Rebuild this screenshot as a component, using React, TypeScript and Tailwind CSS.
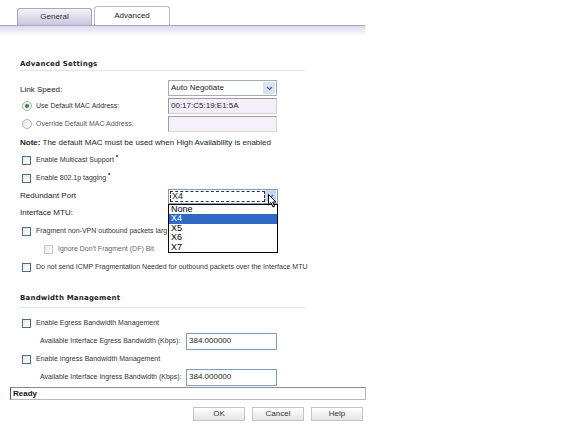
import type { ReactNode } from 'react';

const sans = { fontFamily: '"Liberation Sans", Arial, sans-serif' };
const heavy = { fontFamily: '"DejaVu Sans", Verdana, sans-serif' };

function Checkbox({ disabled }: { disabled?: boolean }) {
  return (
    <span
      className={
        'inline-block h-[9px] w-[9px] shrink-0 border bg-gradient-to-br from-[#e8e8e4] to-white ' +
        (disabled ? 'border-[#c8c8c8]' : 'border-[#4f6e8c]')
      }
    />
  );
}

function Radio({ checked }: { checked?: boolean }) {
  return (
    <span className="flex h-[10px] w-[10px] shrink-0 items-center justify-center rounded-full border border-[#b4b4b4] bg-gradient-to-br from-[#e6e6e6] to-white">
      {checked && <span className="h-[4px] w-[4px] rounded-full bg-[#2e8a3c]" />}
    </span>
  );
}

function Row({ children, className = '' }: { children: ReactNode; className?: string }) {
  return <div className={'flex h-[18px] items-center ' + className}>{children}</div>;
}

function Small({ children, className = '' }: { children: ReactNode; className?: string }) {
  return <span className={'text-[7px] whitespace-nowrap text-[#333] ' + className}>{children}</span>;
}

function Arrow() {
  return (
    <svg width="7" height="5" viewBox="0 0 7 5">
      <path d="M1 1 L3.5 3.5 L6 1" fill="none" stroke="#4d6185" strokeWidth="1.2" />
    </svg>
  );
}

function Heading({ children, pad = 'pb-[1px]' }: { children: ReactNode; pad?: string }) {
  return (
    <div className={'w-[285px] border-b border-[#dfe6ec] leading-[10px] ' + pad}>
      <span className="text-[7px] font-bold tracking-[0.2px] text-[#1c1c2c]" style={heavy}>
        {children}
      </span>
    </div>
  );
}

export default function App() {
  return (
    <div className="relative h-[440px] w-[576px] overflow-hidden bg-white text-[8px] leading-[1.2] text-black" style={sans}>
      {/* tabs */}
      <div className="flex h-[25px] items-end pl-[17px]">
        <div className="flex h-[17px] w-[75px] items-center justify-center rounded-t-[3px] border border-b-0 border-[#a7a5bd] bg-gradient-to-b from-[#f4f3fa] to-[#c9c7dc] text-[8px] text-[#333]">
          General
        </div>
        <div className="relative z-10 ml-[2px] flex h-[19px] w-[76px] items-center justify-center rounded-t-[3px] border border-b-0 border-[#b7b6c8] bg-white text-[8px] text-[#222]">
          Advanced
        </div>
      </div>
      <div className="h-[11px] w-[365px] border-t border-[#a9a5c4] bg-gradient-to-b from-[#dcd8f0] to-white" />

      <div className="pl-[20px] pt-[23px]">
        <Heading>Advanced Settings</Heading>

        <div className="pt-[8px]">
          <Row>
            <span className="w-[148px] pt-[4px] text-[8px] text-[#222]">Link Speed:</span>
            <div className="flex h-[16px] w-[109px] items-center justify-between border border-[#a7abb3] bg-white pl-[2px] pr-[1px]">
              <span className="text-[8px] text-[#222]">Auto Negotiate</span>
              <span className="flex h-[12px] w-[12px] items-center justify-center rounded-[1px] bg-[#d8e4f6]">
                <Arrow />
              </span>
            </div>
          </Row>
          <Row>
            <div className="flex w-[148px] items-center pl-[2px]">
              <Radio checked />
              <Small className="ml-[4px]">Use Default MAC Address:</Small>
            </div>
            <div className="flex h-[16px] w-[109px] items-center border border-[#d0d0d0] border-t-[#9a9a9a] border-l-[#9a9a9a] bg-[#f4eefb] pl-[2px] text-[8px] text-[#222]">
              00:17:C5:19:E1:5A
            </div>
          </Row>
          <Row>
            <div className="flex w-[148px] items-center pl-[2px]">
              <Radio />
              <Small className="ml-[4px] text-[#555]">Override Default MAC Address:</Small>
            </div>
            <div className="h-[16px] w-[109px] border border-[#d8d8d8] border-t-[#a0a0a0] border-l-[#a0a0a0] bg-[#f4f1fa]" />
          </Row>
          <Row className="pt-[1px]">
            <span className="text-[8px] text-[#222]">
              <b>Note:</b> The default MAC must be used when High Availability is enabled
            </span>
          </Row>
          <Row>
            <div className="flex items-center pl-[2px]">
              <Checkbox />
              <Small className="ml-[5px]">Enable Multicast Support</Small>
              <span className="ml-[2px] -mt-[4px] text-[6px] font-bold">*</span>
            </div>
          </Row>
          <Row>
            <div className="flex items-center pl-[2px]">
              <Checkbox />
              <Small className="ml-[5px]">Enable 802.1p tagging</Small>
              <span className="ml-[2px] -mt-[4px] text-[6px] font-bold">*</span>
            </div>
          </Row>
          <Row>
            <span className="w-[148px] text-[8px] text-[#222]">Redundant Port</span>
            <div className="relative z-10 flex h-[15px] w-[110px] items-center justify-between border border-[#7f9db9] bg-white pr-[1px]">
              <span className="ml-[1px] flex h-[11px] w-[96px] items-center border border-dashed border-[#333] pl-[1px] text-[9px] text-[#222]">
                X4
              </span>
              <span className="flex h-[12px] w-[11px] items-center justify-center rounded-[1px] bg-[#c6d6f2]">
                <Arrow />
              </span>
              <div className="absolute left-[-1px] top-[14px] flex w-[110px] flex-col border border-black bg-white text-[9px] leading-[9.6px] text-black">
                <span className="pl-[2px]">None</span>
                <span className="bg-[#316ac5] pl-[2px] text-white">X4</span>
                <span className="pl-[2px]">X5</span>
                <span className="pl-[2px]">X6</span>
                <span className="pl-[2px]">X7</span>
              </div>
              <svg className="absolute left-[99px] top-[4px]" width="10" height="15" viewBox="0 0 10 15">
                <path d="M0.5 0.5 L0.5 11 L3 8.6 L5 13 L6.6 12.3 L4.7 8 L8 8 Z" fill="white" stroke="black" strokeWidth="1" strokeLinejoin="round" />
              </svg>
            </div>
          </Row>
          <Row className="-mt-[1px]">
            <span className="text-[8px] text-[#222]">Interface MTU:</span>
          </Row>
          <Row>
            <div className="flex w-[147px] items-center overflow-hidden pl-[2px]">
              <Checkbox />
              <Small className="ml-[5px]">Fragment non-VPN outbound packets larger than this Interface&apos;s MTU</Small>
            </div>
          </Row>
          <Row>
            <div className="flex items-center pl-[24px]">
              <Checkbox disabled />
              <Small className="ml-[5px] text-[#666]">Ignore Don&apos;t Fragment (DF) Bit</Small>
            </div>
          </Row>
          <Row>
            <div className="flex items-center pl-[2px]">
              <Checkbox />
              <Small className="ml-[5px]">Do not send ICMP Fragmentation Needed for outbound packets over the Interface MTU</Small>
            </div>
          </Row>
        </div>

        <div className="pt-[17px]">
          <Heading pad="pb-[4px]">Bandwidth Management</Heading>
        </div>

        <div className="pt-[6px]">
          <Row>
            <div className="flex items-center pl-[2px]">
              <Checkbox />
              <Small className="ml-[5px]">Enable Egress Bandwidth Management</Small>
            </div>
          </Row>
          <Row>
            <Small className="w-[166px] pl-[20px]">Available Interface Egress Bandwidth (Kbps):</Small>
            <div className="flex h-[17px] w-[91px] items-center border border-[#7f9db9] bg-white pl-[2px] text-[8px] text-[#222]">
              384.000000
            </div>
          </Row>
          <Row>
            <div className="flex items-center pl-[2px]">
              <Checkbox />
              <Small className="ml-[5px]">Enable Ingress Bandwidth Management</Small>
            </div>
          </Row>
          <Row>
            <Small className="w-[166px] pl-[20px]">Available Interface Ingress Bandwidth (Kbps):</Small>
            <div className="flex h-[17px] w-[91px] items-center border border-[#7f9db9] bg-white pl-[2px] text-[8px] text-[#222]">
              384.000000
            </div>
          </Row>
        </div>
      </div>

      {/* status + buttons */}
      <div className="ml-[10px] mt-[1px] flex h-[13px] w-[356px] items-center border border-[#b8b8b8] border-l-[#555] border-t-[#8a8a8a] pl-[2px]">
        <span className="text-[8px] font-bold text-[#111]">Ready</span>
      </div>
      <div className="mt-[7px] flex gap-[7px] pl-[193px]">
        {['OK', 'Cancel', 'Help'].map((b) => (
          <div
            key={b}
            className="flex h-[14px] w-[52px] items-center justify-center border border-[#c4c4c4] bg-gradient-to-b from-white to-[#e4e4e4] text-[8px] text-[#333]"
          >
            {b}
          </div>
        ))}
      </div>
    </div>
  );
}
